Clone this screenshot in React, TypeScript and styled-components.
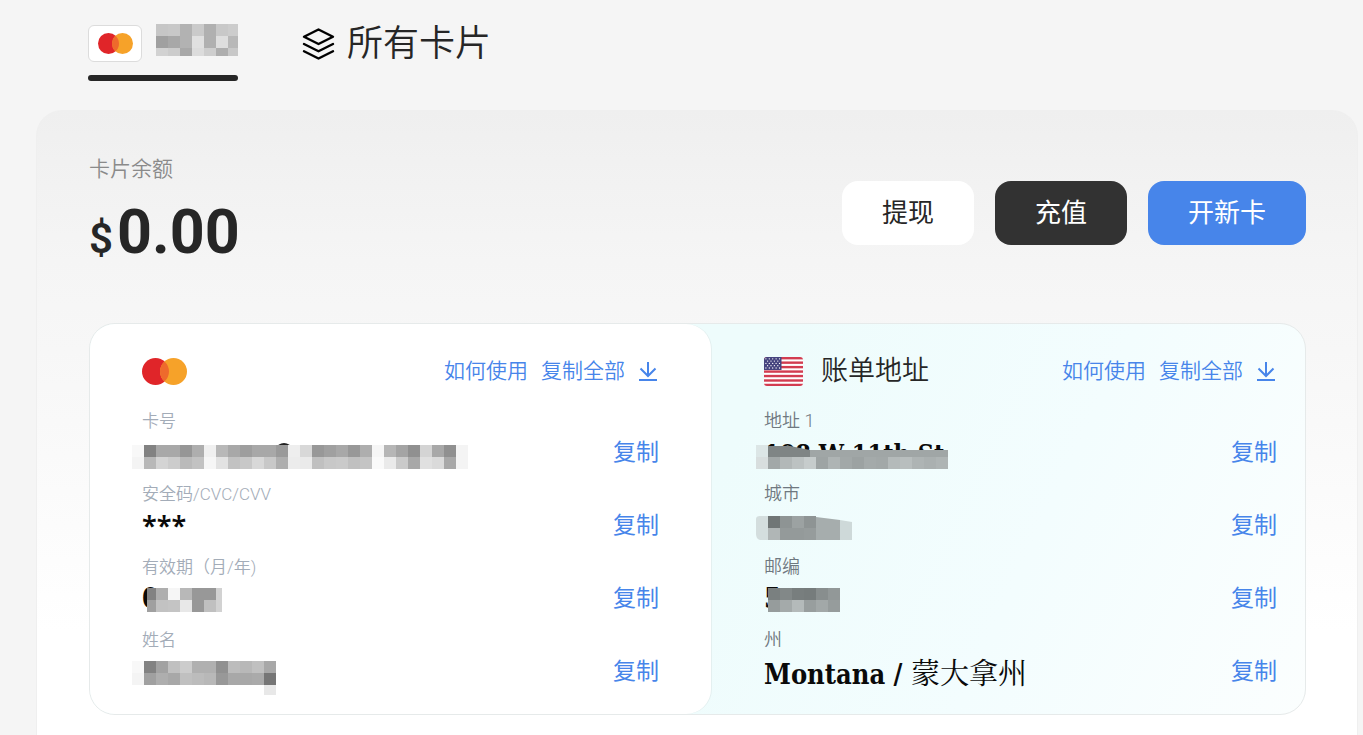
import React from 'react';
import styled, { createGlobalStyle } from 'styled-components';

const GlobalStyle = createGlobalStyle`
  *, *::before, *::after { box-sizing: border-box; }
  body {
    margin: 0;
    background: #f5f5f5;
    color: #262626;
    font-family: Roboto, "Noto Sans CJK SC", sans-serif;
    font-weight: 350;
    overflow-x: hidden;
  }
  button { font-family: inherit; border: 0; padding: 0; cursor: pointer; }
`;

const Page = styled.main`
  display: flex;
  flex-direction: column;
  min-height: 100vh;
  padding: 20px 5px 0 36px;
`;

const Tabs = styled.nav`
  display: flex;
  gap: 64px;
  padding: 0 52px;
  margin-bottom: 29px;
`;

const Tab = styled.button<{ $active?: boolean }>`
  position: relative;
  display: flex;
  align-items: center;
  gap: 12px;
  height: 61px;
  padding-bottom: 14px;
  background: none;
  color: #262626;
  font-size: 36px;
  font-weight: 350;
  line-height: 44px;

  &::after {
    content: "";
    display: ${(p) => (p.$active ? 'block' : 'none')};
    position: absolute;
    left: 0;
    right: 0;
    bottom: 0;
    height: 6px;
    border-radius: 3px;
    background: #262626;
  }
`;

const CardBadge = styled.span`
  display: flex;
  align-items: center;
  justify-content: center;
  width: 54px;
  height: 37px;
  border: 1px solid #dcdcdc;
  border-radius: 6px;
  background: #fff;
`;

const Panel = styled.section`
  flex: 1;
  padding: 43px 51px 20px 52px;
  border: 1px solid #efefef;
  border-bottom: 0;
  border-radius: 26px 26px 0 0;
  background: linear-gradient(#efefef 0, #f5f5f5 150px, #f7f7f7 240px, #fff 520px);
`;

const Summary = styled.div`
  display: flex;
  align-items: center;
  justify-content: space-between;
  margin-bottom: 51px;
`;

const Balance = styled.div`
  display: grid;
  gap: 16px;
`;

const BalanceLabel = styled.div`
  color: #8a8a8a;
  font-size: 21px;
  line-height: 30px;
`;

const Amount = styled.div`
  display: flex;
  align-items: baseline;
  gap: 4px;
  height: 72px;
  font-size: 61px;
  font-weight: 700;
  line-height: 64px;
`;

const Currency = styled.span`
  font-size: 42px;
  font-weight: 600;
`;

const Actions = styled.div`
  display: flex;
  gap: 21px;
`;

const Action = styled.button<{ $bg: string; $fg: string }>`
  height: 64px;
  padding: 0 40px;
  border-radius: 16px;
  background: ${(p) => p.$bg};
  color: ${(p) => p.$fg};
  font-size: 26px;
  font-weight: 400;
  line-height: 36px;
`;

const Details = styled.div`
  display: grid;
  grid-template-columns: 621fr 594fr;
  border: 1px solid #e6eaea;
  border-radius: 26px;
  background: linear-gradient(115deg, #eefcfc 50%, #f3fdfe 75%, #fbfefe);
`;

const Side = styled.section<{ $card?: boolean }>`
  padding: ${(p) => (p.$card ? '33px 52px 24px' : '33px 28px 24px 53px')};
  border-radius: 25px;
  background: ${(p) => (p.$card ? '#fff' : 'transparent')};
  box-shadow: ${(p) => (p.$card ? '1px 0 0 #e4f0f0' : 'none')};
`;

const SideHeader = styled.header`
  display: flex;
  align-items: center;
  justify-content: space-between;
  height: 28px;
  margin-bottom: 24px;
`;

const SideTitle = styled.h2`
  display: flex;
  align-items: center;
  gap: 18px;
  margin: 0;
  font-size: 27px;
  font-weight: 350;
  line-height: 28px;
`;

const Links = styled.div`
  display: flex;
  align-items: center;
  gap: 13px;
  padding-right: 1px;
`;

const TextLink = styled.a`
  color: #4785ea;
  font-size: 21px;
  line-height: 28px;
  text-decoration: none;
`;

const IconButton = styled.button`
  display: flex;
  background: none;
  color: #4785ea;
`;

const Fields = styled.dl`
  display: grid;
  gap: 11px;
  margin: 0;
`;

const Field = styled.div`
  display: grid;
  grid-template-columns: 1fr auto;
  row-gap: 2px;
`;

const FieldLabel = styled.dt<{ $card?: boolean }>`
  grid-column: 1 / -1;
  color: ${(p) => (p.$card ? '#a3acb8' : '#6f7880')};
  font-size: ${(p) => (p.$card ? '17px' : '18px')};
  line-height: 24px;
`;

const FieldValue = styled.dd`
  position: relative;
  height: 36px;
  margin: 0;
  color: #0a0a0a;
  font-family: "DejaVu Serif Condensed", "DejaVu Serif", "Noto Sans CJK SC", serif;
  font-size: 27px;
  font-weight: 700;
  line-height: 36px;
  white-space: nowrap;
`;

const Street = styled.span`
  font-size: 25px;
`;

const Secret = styled.span`
  font-family: "Noto Sans", sans-serif;
  font-weight: 600;
`;

const LocalName = styled.span`
  font-family: "Noto Serif CJK SC", "Noto Sans CJK SC", serif;
  font-size: 29px;
  font-weight: 400;
`;

const CopyButton = styled.button`
  height: 36px;
  background: none;
  color: #4785ea;
  font-size: 23px;
  font-weight: 400;
  line-height: 36px;
`;

const MaskLayer = styled.svg`
  position: absolute;
  top: 0;
  left: -10px;
  overflow: visible;
`;

const CELL = 12;

/* Each row is a string of two-digit grey levels. */
function Cells({ rows, x = 0, y = 0, tint = false }: { rows: string[]; x?: number; y?: number; tint?: boolean }) {
  return (
    <g shapeRendering="crispEdges">
      {rows.flatMap((row, r) =>
        row.split(' ').map((v, c) => {
          const g = parseInt(v, 16);
          const fill = tint ? `rgb(${g - 4},${g + 2},${g + 2})` : `rgb(${g},${g},${g})`;
          return <rect key={`${r}-${c}`} x={x + c * CELL} y={y + r * CELL} width={CELL} height={CELL} fill={fill} />;
        }),
      )}
    </g>
  );
}

function Mask({ children }: { children: React.ReactNode }) {
  return (
    <MaskLayer width="340" height="36" aria-hidden="true">
      {children}
    </MaskLayer>
  );
}

function MastercardMark({ width, height }: { width: number; height: number }) {
  return (
    <svg width={width} height={height} viewBox="0 0 45 27" aria-hidden="true">
      <circle cx="13.5" cy="13.5" r="13.5" fill="#e02529" />
      <circle cx="31.5" cy="13.5" r="13.5" fill="#f6a229" />
      <path d="M22.5 3.44a13.5 13.5 0 0 1 0 20.12a13.5 13.5 0 0 1 0-20.12Z" fill="#ee6a2c" />
    </svg>
  );
}

function LayersIcon() {
  return (
    <svg width="33" height="34" viewBox="0 0 33 34" fill="none" stroke="#000" strokeWidth="2.4" strokeLinecap="round" strokeLinejoin="round" aria-hidden="true">
      <path d="M16.5 2.5 31 9.7 16.5 17 2 9.7Z" />
      <path d="M2 17 16.5 24.2 31 17" />
      <path d="M2 24.3 16.5 31.5 31 24.3" />
    </svg>
  );
}

function DownloadIcon() {
  return (
    <svg width="20" height="22" viewBox="0 0 20 22" fill="none" stroke="currentColor" strokeWidth="2" aria-hidden="true">
      <path d="M10 2v13.5M2.5 8.5 10 16l7.5-7.5M1 20h18" />
    </svg>
  );
}

function UsFlag() {
  const stars: React.ReactNode[] = [];
  for (let r = 0; r < 5; r++) {
    for (let c = 0; c < (r % 2 ? 4 : 5); c++) {
      stars.push(<circle key={`${r}-${c}`} cx={1.9 + c * 3.4 + (r % 2 ? 1.7 : 0)} cy={1.8 + r * 2.3} r="0.65" fill="#fff" />);
    }
  }
  return (
    <svg width="39" height="29" viewBox="0 0 39 29" aria-hidden="true">
      <clipPath id="flag-shape">
        <rect width="39" height="29" rx="3" />
      </clipPath>
      <g clipPath="url(#flag-shape)">
        <rect width="39" height="29" fill="#fff" />
        {[0, 1, 2, 3, 4, 5, 6].map((i) => (
          <rect key={i} y={i * 4.46} width="39" height="2.4" fill="#d23c50" />
        ))}
        <rect width="17.5" height="13" fill="#46447f" />
        {stars}
      </g>
    </svg>
  );
}

function SideLinks() {
  return (
    <Links>
      <TextLink href="#usage">如何使用</TextLink>
      <TextLink href="#copy-all">复制全部</TextLink>
      <IconButton type="button" aria-label="下载">
        <DownloadIcon />
      </IconButton>
    </Links>
  );
}

interface EntryProps {
  label: string;
  card?: boolean;
  children: React.ReactNode;
}

function Entry({ label, card, children }: EntryProps) {
  return (
    <Field>
      <FieldLabel $card={card}>{label}</FieldLabel>
      <FieldValue>{children}</FieldValue>
      <CopyButton type="button">复制</CopyButton>
    </Field>
  );
}

export default function App() {
  return (
    <>
      <GlobalStyle />
      <Page>
        <Tabs>
          <Tab type="button" $active aria-label="Mastercard">
            <CardBadge>
              <MastercardMark width={35} height={21} />
            </CardBadge>
            <svg width="84" height="40" aria-hidden="true">
              <svg width="84" height="32">
                <Cells
                  x={2}
                  rows={['c6 c8 b2 ca b0 c8 cc', 'a0 a8 b2 e0 b0 de b8', 'd2 cc a8 dc ce ae c8']}
                />
              </svg>
            </svg>
          </Tab>
          <Tab type="button">
            <LayersIcon />
            所有卡片
          </Tab>
        </Tabs>

        <Panel>
          <Summary>
            <Balance>
              <BalanceLabel>卡片余额</BalanceLabel>
              <Amount>
                <Currency>$</Currency>0.00
              </Amount>
            </Balance>
            <Actions>
              <Action type="button" $bg="#fff" $fg="#262626">提现</Action>
              <Action type="button" $bg="#323232" $fg="#fff">充值</Action>
              <Action type="button" $bg="#4785ea" $fg="#fff">开新卡</Action>
            </Actions>
          </Summary>

          <Details>
            <Side $card>
              <SideHeader>
                <MastercardMark width={45} height={27} />
                <SideLinks />
              </SideHeader>
              <Fields>
                <Entry label="卡号" card>
                  <Mask>
                    <path d="M147 10.500q5-3 10 0" fill="none" stroke="#222" strokeWidth="2" />
                    <Cells
                      y={10}
                      rows={[
                        'f8 82 a8 a8 96 ae f0 b8 a8 9e a8 a8 9a ee d8 98 a0 a8 98 ae f6 b6 a4 90 d4 a8 90 f4',
                        'f4 b8 d4 cc ba c2 f6 e2 c2 c8 d8 c8 ae ec ea c0 c8 ca c0 c4 fa ea ca a8 e0 da a8 f4',
                      ]}
                    />
                  </Mask>
                </Entry>
                <Entry label="安全码/CVC/CVV" card>
                  <Secret>***</Secret>
                </Entry>
                <Entry label="有效期（月/年)" card>
                  0
                  <Mask>
                    <rect x="15" y="7" width="9" height="12" fill="#828282" />
                    <rect x="15" y="19" width="9" height="12" fill="#a0a0a0" />
                    <Cells x={24} y={7} rows={['ae f6 b8 98 98', 'c2 c4 e8 98 c0']} />
                    <rect x="84" y="7" width="6" height="24" fill="#d2d2d2" />
                  </Mask>
                </Entry>
                <Entry label="姓名" card>
                  <Mask>
                    <Cells y={7} rows={['f8 82 a2 c0 cc b0 b0 90 bc b8 c0 a8', 'f4 a0 ae a8 c0 bc b8 98 a8 a8 aa 76']} />
                    <rect x="132" y="31" width="12" height="10" fill="#e8e8e8" />
                  </Mask>
                </Entry>
              </Fields>
            </Side>

            <Side>
              <SideHeader>
                <SideTitle>
                  <UsFlag />
                  账单地址
                </SideTitle>
                <SideLinks />
              </SideHeader>
              <Fields>
                <Entry label="地址 1">
                  <Street>108 W 11th St</Street>
                  <Mask>
                    <path d="M14 11h22l20 4h138v8H14Z" fill="#7f8585" />
                    <Cells tint x={2} y={22} rows={['dc a6 b6 c0 ca a2 b2 a6 a0 a8 a6 b8 bc b2 ae b2']} />
                    <path d="M56 15h138v7H56Z" fill="#a0a6a6" />
                    <path d="M2 10h12v12H2Z" fill="#dce6e6" />
                  </Mask>
                </Entry>
                <Entry label="城市">
                  <Mask>
                    <path d="M2 11q0-3 4-3h8v24H6q-4-1-4-6Z" fill="#d4dede" />
                    <Cells tint x={14} y={8} rows={['74 92 a0 92', 'b4 98 98 9a']} />
                    <path d="M62 9l24 3v20H62Z" fill="#a6adad" />
                    <path d="M86 12l12 2v18H86Z" fill="#ced9d9" />
                  </Mask>
                </Entry>
                <Entry label="邮编">
                  5
                  <Mask>
                    <Cells tint x={14} y={7} rows={['7e 86 7c 7a 8c 96', '9a a8 b8 9c a6 9a']} />
                  </Mask>
                </Entry>
                <Entry label="州">
                  Montana / <LocalName>蒙大拿州</LocalName>
                </Entry>
              </Fields>
            </Side>
          </Details>
        </Panel>
      </Page>
    </>
  );
}
